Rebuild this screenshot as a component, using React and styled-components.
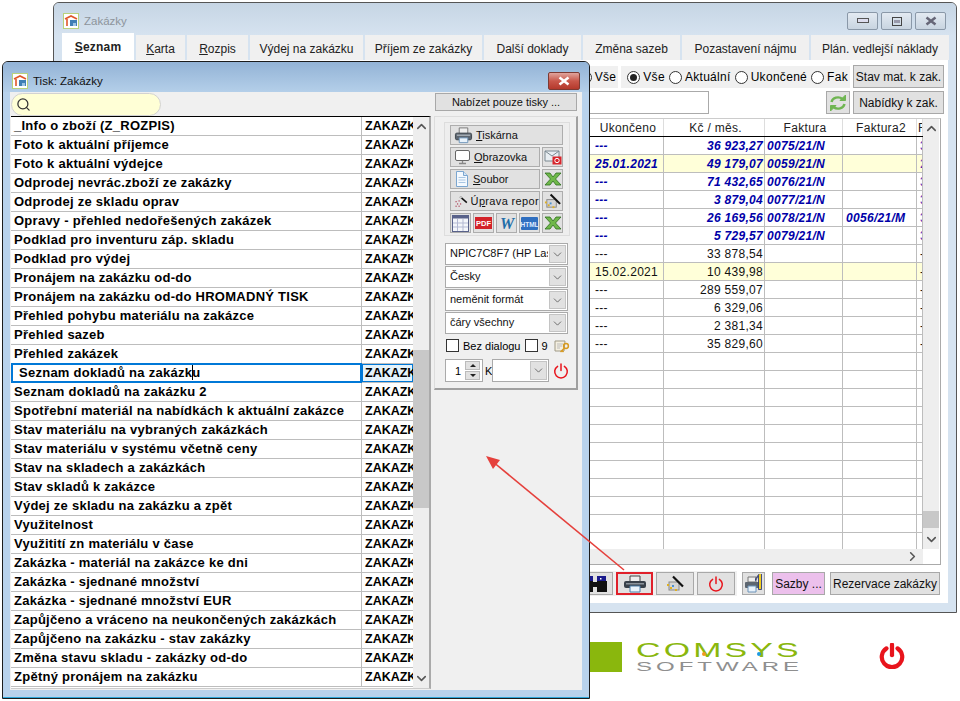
import React from "react";
import styled, { createGlobalStyle } from "styled-components";
import { ChevronDown, ChevronUp, ChevronRight, Search } from "lucide-react";

const Global = createGlobalStyle`
  html, body { margin:0; padding:0; background:#fff; }
  body { font-family:"Liberation Sans", Arial, sans-serif; font-size:12px; color:#000; }
  * { box-sizing:border-box; }
`;

const Desktop = styled.div`
  position:relative;
  width:960px;
  height:701px;
  overflow:hidden;
  padding:2px 0 0 53px;
`;

/* main window */
const MainWindow = styled.div`
  width:904px;
  height:611px;
  border:1px solid #555;
  border-radius:6px 6px 0 0;
  background:#d6e3f0;
  display:flex;
  flex-direction:column;
  padding:0 8px 9px;
`;
const TitleBar = styled.div`
  height:${({ $h }) => $h}px;
  flex:none;
  display:flex;
  align-items:center;
  gap:5px;
  color:${({ $active }) => ($active ? "#111" : "#8d949b")};
  font-size:11.5px;
`;
const MainTitle = styled(TitleBar)`
  margin:0 -8px;
  padding:3px 10px 0 9px;
  background:linear-gradient(#c6d5e4, #d6e3f0);
  border-radius:5px 5px 0 0;
`;
const WinButtons = styled.div`
  margin-left:auto;
  display:flex;
  gap:3px;
`;
const WinBtn = styled.div`
  width:${({ $w }) => $w || 31}px;
  height:18px;
  border:1px solid ${({ $red }) => ($red ? "#7d3a33" : "#8a98a8")};
  border-radius:2px;
  background:${({ $red }) => ($red ? "linear-gradient(#e0a49c,#c9574a 50%,#b4392c)" : "linear-gradient(#e3eaf2,#c8d4e0)")};
  display:flex;
  align-items:center;
  justify-content:center;
`;
const Tabs = styled.div`
  display:flex;
  height:27px;
  flex:none;
  align-items:flex-end;
  margin-top:-3px;
`;
const Tab = styled.div`
  width:${({ $w }) => $w}px;
  height:${({ $on }) => ($on ? 27 : 25)}px;
  margin-right:2px;
  padding-top:${({ $on }) => ($on ? 0 : 2)}px;
  flex:none;
  display:flex;
  align-items:center;
  justify-content:center;
  font-size:12px;
  letter-spacing:${({ $on }) => ($on ? ".2px" : "0")};
  font-weight:${({ $on }) => ($on ? 700 : 400)};
  background:${({ $on }) => ($on ? "#fff" : "#f0f0f0")};
  color:#222;
  u { text-underline-offset:1px; }
`;
const Client = styled.div`
  flex:1;
  min-height:0;
  background:#fff;
  padding:5px 4px 0;
  display:flex;
  flex-direction:column;
`;
const FilterRow = styled.div`
  display:flex;
  justify-content:flex-end;
  gap:3px;
  height:23px;
  flex:none;
`;
const SearchRow = styled(FilterRow)`
  margin-top:3px;
  justify-content:flex-start;
`;
const RadioGroup = styled.div`
  display:flex;
  align-items:center;
  gap:4px;
  height:22px;
  margin-top:1px;
  padding:0 2px 0 6px;
  background:#f0f0f0;
  font-size:12px;
  letter-spacing:.3px;
`;
const RadioLabel = styled.label`
  display:flex;
  align-items:center;
  gap:3px;
`;
const RadioDot = styled.span`
  width:13px;
  height:13px;
  border-radius:50%;
  border:1px solid #333;
  background:#fff;
  display:flex;
  align-items:center;
  justify-content:center;
  &::after {
    content:"";
    display:${({ $on }) => ($on ? "block" : "none")};
    width:7px;
    height:7px;
    border-radius:50%;
    background:#222;
  }
`;
const GrayBtn = styled.div`
  width:${({ $w }) => $w}px;
  height:${({ $h }) => $h || 23}px;
  flex:none;
  display:flex;
  align-items:center;
  justify-content:center;
  gap:3px;
  overflow:hidden;
  white-space:nowrap;
  background:${({ $bg }) => $bg || "#e1e1e1"};
  border:${({ $line }) => ($line ? `2px solid ${$line}` : "1px solid #a8a8a8")};
  color:#111;
  font-size:12px;
`;
const SazbyBtn = styled(GrayBtn)`
  margin-left:2px;
`;
const TextInput = styled.div`
  width:646px;
  height:23px;
  margin-right:114px;
  border:1px solid #aaa;
  background:#fff;
`;

/* data table of the main window */
const TableBox = styled.div`
  flex:none;
  margin:4px 0 0;
  width:875px;
  height:447px;
  border:1px solid #aaa;
  border-top-color:#ccc;
  display:grid;
  grid-template-columns:856px 16px 1px;
  grid-template-rows:430px 15px;
`;
const TableBody = styled.div`
  overflow:hidden;
`;
const HeadRow = styled.div`
  display:flex;
  height:18px;
  border-bottom:1px solid #000;
`;
const Row = styled.div`
  display:flex;
  height:18px;
  border-bottom:1px solid #bdbdbd;
  background:${({ $yellow }) => ($yellow ? "#ffffd9" : "#fff")};
`;
const Cell = styled.div`
  width:${({ $w }) => $w}px;
  flex:none;
  overflow:hidden;
  white-space:nowrap;
  border-right:1px solid #bdbdbd;
  padding:0 1px 0 ${({ $pad }) => ($pad === undefined ? 4 : $pad)}px;
  line-height:18px;
  font-size:12px;
  letter-spacing:.3px;
  text-align:${({ $right }) => ($right ? "right" : "left")};
  color:${({ $bold, $purple }) => ($purple ? "#5a1fb0" : $bold ? "#0000a8" : "#111")};
  font-weight:${({ $bold }) => ($bold ? 700 : 400)};
  font-style:${({ $bold }) => ($bold ? "italic" : "normal")};
`;
const HeadCell = styled(Cell)`
  text-align:center;
  color:#222;
  border-right-color:#ddd;
  font-weight:400;
  font-style:normal;
`;
const BlankCell = styled.div`
  width:${({ $w }) => $w}px;
  flex:none;
`;
const ScrollV = styled.div`
  background:#eee;
  display:flex;
  flex-direction:column;
  align-items:center;
  justify-content:space-between;
  position:relative;
  padding:2px 0;
  color:#555;
`;
const ScrollH = styled.div`
  background:#eee;
  display:flex;
  align-items:center;
  justify-content:flex-end;
  padding-right:3px;
  color:#555;
`;
const Thumb = styled.div`
  position:absolute;
  left:0;
  right:0;
  top:${({ $top }) => $top}px;
  height:${({ $h }) => $h}px;
  background:#c8c8c8;
`;
const Toolbar = styled.div`
  display:flex;
  align-items:center;
  height:25px;
  flex:none;
  margin-top:6px;
  padding-right:4px;
  justify-content:flex-end;
  gap:5px;
`;
const ToolStrip = styled.div`
  display:flex;
  gap:3px;
  align-items:center;
  background:#f0f0f0;
  height:25px;
  padding-right:2px;
`;

/* footer with logo */
const Footer = styled.div`
  display:flex;
  margin:29px 0 0 537px;
  height:32px;
  align-items:flex-start;
`;
const GreenBlock = styled.div`
  width:32px;
  height:30px;
  background:#8ab70d;
  margin-right:14px;
  flex:none;
`;
const Logo = styled.div`
  position:relative;
  width:162px;
  height:30px;
  flex:none;
`;
const LogoMain = styled.div`
  font-size:21px;
  line-height:16px;
  color:#8ab70d;
  letter-spacing:2px;
  transform:scaleX(1.61);
  transform-origin:left center;
  white-space:nowrap;
  height:20px;
`;
const LogoSub = styled.div`
  font-size:12px;
  line-height:10px;
  color:#8f8f8f;
  letter-spacing:2px;
  transform:scaleX(2);
  transform-origin:left center;
  white-space:nowrap;
`;
const LogoDot = styled.span`
  position:absolute;
  top:10px;
  left:${({ $x }) => $x}px;
  width:4px;
  height:4px;
  border-radius:50%;
  background:${({ $c }) => $c};
`;
const FooterPower = styled.div`
  margin-left:81px;
  margin-top:1px;
`;

/* print dialog */
const Dialog = styled.div`
  position:absolute;
  left:2px;
  top:61px;
  width:588px;
  height:638px;
  border:1px solid #1c1c1c;
  border-radius:6px 6px 0 0;
  background:#b8d2ec;
  padding:0 7px 8px;
  display:flex;
  flex-direction:column;
  box-shadow:inset 0 -1px 0 #2ea6d8;
`;
const DialogTitle = styled(TitleBar)`
  margin:0 -7px;
  padding:7px 9px 0 9px;
  background:linear-gradient(#93b3d6, #b4cfe9);
  border-radius:5px 5px 0 0;
`;
const DialogBody = styled.div`
  flex:1;
  min-height:0;
  background:#f0f0f0;
  padding:1px 0 0 1px;
  display:flex;
  flex-direction:column;
`;
const DialogTop = styled.div`
  display:flex;
  justify-content:space-between;
  height:23px;
  flex:none;
  padding-right:5px;
`;
const Pill = styled.div`
  width:150px;
  height:23px;
  border-radius:12px;
  background:#ffffd6;
  border:1px solid #d2d2d2;
  display:flex;
  align-items:center;
  padding-left:4px;
  color:#333;
`;
const FilterBtn = styled(GrayBtn)`
  height:18px;
  font-size:11px;
`;
const DialogMain = styled.div`
  display:flex;
  gap:3px;
  align-items:flex-start;
`;
const ReportList = styled.div`
  width:420px;
  height:573px;
  flex:none;
  border-top:1px solid #000;
  border-right:2px solid #aaa;
  border-bottom:1px solid #ccc;
  background:#fff;
  display:grid;
  grid-template-columns:402px 16px;
`;
const ReportRows = styled.div`
  overflow:hidden;
`;
const ReportRow = styled.div`
  display:flex;
  height:19px;
  border-bottom:1px solid #bdbdbd;
  font-size:13px;
  line-height:18px;
  letter-spacing:.26px;
  font-weight:700;
`;
const ReportName = styled.div`
  width:351px;
  flex:none;
  padding-left:3px;
  white-space:nowrap;
  overflow:hidden;
  border-right:1px solid #bdbdbd;
  ${({ $sel }) => $sel && "border:2px solid #0078d7; line-height:16px; margin-top:-1px; height:20px; padding-left:6px;"}
`;
const ReportCode = styled.div`
  width:51px;
  flex:none;
  overflow:hidden;
  white-space:nowrap;
  padding-left:3px;
  font-size:12.5px;
  letter-spacing:0;
  ${({ $sel }) => $sel && "background:#e5f3fb; box-shadow:inset 0 0 0 1px #0078d7;"}
`;
const Caret = styled.span`
  display:inline-block;
  width:1px;
  height:15px;
  margin:0 -1px -3px 0;
  background:#000;
`;
const SidePanel = styled.div`
  width:144px;
  height:274px;
  flex:none;
  background:#f0f0f0;
  border-left:1px solid #ddd;
  border-top:1px solid #ddd;
  border-right:2px solid #a0a0a0;
  border-bottom:2px solid #a0a0a0;
  padding:5px 7px 0 9px;
`;
const OutputGroup = styled.div`
  width:126px;
  height:114px;
  background:#eee;
  border:1px solid #ddd;
  padding:2px 5px;
  display:flex;
  flex-direction:column;
  gap:2px;
`;
const OutRow = styled.div`
  display:flex;
  gap:2px;
`;
const OutBtn = styled.div`
  width:${({ $w }) => $w || 21}px;
  height:20px;
  flex:none;
  background:#e1e1e1;
  border:1px solid #adadad;
  display:flex;
  align-items:center;
  justify-content:${({ $w }) => ($w ? "flex-start" : "center")};
  padding-left:${({ $w }) => ($w ? 3 : 0)}px;
  gap:3px;
  overflow:hidden;
  white-space:nowrap;
  font-size:11px;
  color:#111;
  u { text-underline-offset:1px; }
`;
const WideLabel = styled.span`
  letter-spacing:.35px;
`;
const SelectStack = styled.div`
  margin:7px 0 0 1px;
  display:flex;
  flex-direction:column;
  gap:1px;
`;
const SelectBox = styled.div`
  width:${({ $w }) => $w || 123}px;
  height:${({ $h }) => $h || 22}px;
  border:1px solid #aaa;
  background:#fff;
  display:flex;
  align-items:stretch;
  font-size:11px;
  color:#111;
`;
const SelectText = styled.div`
  flex:1;
  min-width:0;
  padding-left:4px;
  line-height:19px;
  overflow:hidden;
  white-space:nowrap;
`;
const SelectArrow = styled.div`
  width:17px;
  margin:1px;
  flex:none;
  background:#e1e1e1;
  border:1px solid #c4c4c4;
  color:#555;
  display:flex;
  align-items:center;
  justify-content:center;
`;
const CheckRow = styled.div`
  display:flex;
  align-items:center;
  margin-top:5px;
  height:13px;
  font-size:11px;
  white-space:nowrap;
  padding-left:2px;
  gap:4px;
`;
const CheckBox = styled.span`
  width:13px;
  height:13px;
  border:1px solid #333;
  background:#fff;
  flex:none;
`;
const KeySlot = styled.span`
  margin-left:2px;
  display:flex;
`;
const SpinRow = styled.div`
  display:flex;
  align-items:center;
  margin:7px 0 0 1px;
  height:23px;
  font-size:11px;
`;
const SpinBox = styled.div`
  width:38px;
  height:23px;
  border:1px solid #aaa;
  background:#fff;
  display:flex;
  justify-content:flex-end;
  align-items:center;
  gap:4px;
  padding-right:2px;
`;
const SpinBtns = styled.div`
  width:15px;
  display:flex;
  flex-direction:column;
  gap:1px;
`;
const SpinBtn = styled.div`
  height:9px;
  background:#e1e1e1;
  border:1px solid #bbb;
  display:flex;
  align-items:center;
  justify-content:center;
  &::after {
    content:"";
    border-left:3px solid transparent;
    border-right:3px solid transparent;
    ${({ $down }) => ($down ? "border-top:3px solid #222;" : "border-bottom:3px solid #222;")}
  }
`;
const SpinK = styled.span`
  width:7px;
  margin-left:2px;
  overflow:hidden;
`;
const PowerSlot = styled.span`
  margin-left:4px;
  display:flex;
`;
const Arrow = styled.svg`
  position:absolute;
  left:0;
  top:0;
  pointer-events:none;
`;

/* drawings */
const AppIcon = () => (
  <svg width="16" height="16" viewBox="0 0 16 16">
    <rect x=".5" y=".5" width="15" height="15" fill="#fff" stroke="#b9d27c" />
    <path d="M2 6 L8 3 L14 6" fill="none" stroke="#e0562a" strokeWidth="1.6" />
    <path d="M4 6v7" stroke="#e0562a" strokeWidth="1.6" />
    <rect x="7" y="7" width="7" height="6" fill="#3f7fb5" />
    <rect x="10" y="10" width="3" height="3" fill="#9cc4e4" />
  </svg>
);
const PrinterIcon = ({ s = 20 }) => (
  <svg width={s} height={s} viewBox="0 0 20 20">
    <path d="M5.5 2h9v6h-9z" fill="#eee" stroke="#777" />
    <rect x="1.5" y="7.5" width="17" height="7" rx="1.5" fill="#5d6670" stroke="#3d444c" />
    <rect x="3" y="9" width="14" height="1.5" fill="#a3abb3" />
    <path d="M5.5 12.5h9v5h-9z" fill="#e8f2fb" stroke="#6d93b8" />
  </svg>
);
const DarkPrinterIcon = () => (
  <svg width="26" height="18" viewBox="0 0 26 18">
    <path d="M8 1h10v6H8z" fill="#eee" stroke="#444" />
    <rect x="2" y="6" width="22" height="7" rx="2" fill="#39414a" />
    <rect x="4" y="8" width="18" height="1.5" fill="#8b939b" />
    <path d="M8 11h10v6H8z" fill="#eaf3fb" stroke="#4c7ea8" />
  </svg>
);
const MonitorIcon = () => (
  <svg width="17" height="16" viewBox="0 0 17 16">
    <rect x="1.5" y="1.5" width="14" height="10" rx="1.5" fill="#fff" stroke="#666" />
    <path d="M8.5 12v2M5 14.5h7" stroke="#888" strokeWidth="1.3" />
  </svg>
);
const DocIcon = () => (
  <svg width="16" height="18" viewBox="0 0 16 18">
    <path d="M2.5 1.5h7l4 4v11h-11z" fill="#f4f9fe" stroke="#7ba6d0" />
    <path d="M9.5 1.5v4h4" fill="#d6e6f5" stroke="#7ba6d0" />
    <path d="M4.5 7.5h7M4.5 10h7M4.5 12.5h7" stroke="#a9c6e2" />
  </svg>
);
const WandIcon = () => (
  <svg width="18" height="17" viewBox="0 0 18 17">
    <path d="M8 2l9 8" stroke="#111" strokeWidth="2" />
    <path d="M8 2l2 1.8" stroke="#ddd" strokeWidth="2" />
    <g fill="#a8324a">
      <rect x="2" y="8" width="1.5" height="1.5" />
      <rect x="6" y="7" width="1.5" height="1.5" />
      <rect x="4" y="11" width="1.5" height="1.5" />
      <rect x="8" y="11" width="1.5" height="1.5" />
      <rect x="2" y="14" width="1.5" height="1.5" />
      <rect x="6" y="14" width="1.5" height="1.5" />
    </g>
  </svg>
);
const ReportWandIcon = ({ s = 18 }) => (
  <svg width={s} height={s} viewBox="0 0 18 18">
    <rect x="3" y="7" width="10" height="8" fill="#d4d4d4" stroke="#888" />
    <g fill="#e0b020">
      <rect x="1" y="9" width="2" height="2" />
      <rect x="4" y="12" width="2" height="2" />
      <rect x="9" y="14" width="2" height="2" />
    </g>
    <rect x="6" y="10" width="2" height="2" fill="#4a90d0" />
    <path d="M7 1.5l10 10" stroke="#111" strokeWidth="2.2" />
  </svg>
);
const MailIcon = () => (
  <svg width="18" height="16" viewBox="0 0 18 16">
    <path d="M1 2h14v10H1z" fill="#e8eef2" stroke="#7c8a92" />
    <path d="M1 2l7 5 7-5" fill="none" stroke="#7c8a92" />
    <rect x="8.5" y="7.5" width="9" height="8" fill="#d8262c" />
    <circle cx="13" cy="11.5" r="2.2" fill="none" stroke="#fff" />
  </svg>
);
const ExcelIcon = () => (
  <svg width="18" height="14" viewBox="0 0 18 14">
    <path d="M1 1h5l3 4 3-4h5l-5.5 6 5.5 6h-5l-3-4-3 4H1l5.5-6z" fill="#6fb84a" stroke="#2e6f1e" strokeWidth=".8" />
  </svg>
);
const CalendarIcon = () => (
  <svg width="17" height="17" viewBox="0 0 17 17">
    <rect x=".5" y=".5" width="16" height="16" fill="#f4f6fa" stroke="#59628a" />
    <rect x=".5" y=".5" width="16" height="3" fill="#59628a" />
    <path d="M5.5 4v12M11 4v12M1 8h15M1 12h15" stroke="#b3b9d2" />
  </svg>
);
const PdfIcon = () => (
  <svg width="17" height="12" viewBox="0 0 17 12">
    <rect width="17" height="12" fill="#d3232a" />
    <text x="8.5" y="9" textAnchor="middle" fontSize="7.5" fontWeight="700" fill="#fff" fontFamily="Liberation Sans">PDF</text>
  </svg>
);
const WordIcon = () => (
  <svg width="18" height="15" viewBox="0 0 18 15">
    <text x="9" y="13" textAnchor="middle" fontSize="16" fontWeight="700" fontStyle="italic" fill="#1f6ea8" fontFamily="Liberation Serif">W</text>
  </svg>
);
const HtmlIcon = () => (
  <svg width="17" height="13" viewBox="0 0 17 13">
    <rect width="17" height="13" rx="1" fill="#2f6fc0" />
    <text x="8.5" y="9.5" textAnchor="middle" fontSize="6.5" fontWeight="700" fill="#dfeaff" fontFamily="Liberation Sans">HTML</text>
  </svg>
);
const KeyIcon = () => (
  <svg width="16" height="16" viewBox="0 0 16 16">
    <path d="M1 3h10l-1 10H1z" fill="#f4efe1" stroke="#a09a86" />
    <path d="M3 6h6M3 8h5M3 10h3" stroke="#bbb" />
    <circle cx="12" cy="8" r="2.4" fill="none" stroke="#d89a1e" strokeWidth="1.5" />
    <path d="M10.5 10l-4 4M8 12.5l1.5 1.5" stroke="#d89a1e" strokeWidth="1.5" />
  </svg>
);
const PowerIcon = ({ s = 16, w = 1.5 }) => (
  <svg width={s} height={s} viewBox="0 0 16 16" fill="none" stroke="#e8141c" strokeWidth={w} strokeLinecap="round">
    <path d="M4.6 3.3a6.3 6.3 0 1 0 6.8 0" />
    <path d="M8 1v6.5" />
  </svg>
);
const RefreshIcon = () => (
  <svg width="20" height="18" viewBox="0 0 20 18" fill="none" stroke="#6fb552" strokeWidth="2.4">
    <path d="M3.5 8a6.5 5.5 0 0 1 11-3" />
    <path d="M16.5 10a6.5 5.5 0 0 1-11 3" />
    <path d="M17.5 1v5.5h-5.5z" fill="#6fb552" strokeWidth="1" />
    <path d="M2.5 17v-5.5h5.5z" fill="#6fb552" strokeWidth="1" />
  </svg>
);
const BinocularsIcon = () => (
  <svg width="26" height="18" viewBox="0 0 26 18">
    <rect x="2" y="1" width="9" height="6" fill="#1a1a8c" />
    <rect x="15" y="1" width="9" height="6" fill="#1a1a8c" />
    <rect x="1" y="6" width="10" height="11" fill="#111" />
    <rect x="15" y="6" width="10" height="11" fill="#111" />
    <rect x="10" y="7" width="6" height="5" fill="#111" />
    <rect x="4" y="3" width="1.5" height="1.5" fill="#fff" />
    <rect x="18" y="3" width="1.5" height="1.5" fill="#fff" />
  </svg>
);
const PrinterOneIcon = () => (
  <svg width="20" height="20" viewBox="0 0 20 20">
    <path d="M4 3h8v5H4z" fill="#eee" stroke="#777" />
    <rect x="1" y="8" width="15" height="6" rx="1" fill="#5d6670" />
    <path d="M4 12h8v6H4z" fill="#e8f2fb" stroke="#6d93b8" />
    <path d="M14.5 1.5v14h3v-16h-2l-4 5v2z" fill="#f2cf1e" stroke="#1b2a80" strokeWidth=".8" />
  </svg>
);

const tabs = [
  ["Seznam", 72, "S"], ["Karta", 49, "K"], ["Rozpis", 61, "R"], ["Výdej na zakázku", 113], ["Příjem ze zakázky", 117],
  ["Další doklady", 97], ["Změna sazeb", 97], ["Pozastavení nájmu", 127], ["Plán. vedlejší náklady", 138],
];

const rows = [
  ["---", "36 923,27", "0075/21/N", "", "3", true],
  ["25.01.2021", "49 179,07", "0059/21/N", "", "2", true, true],
  ["---", "71 432,65", "0076/21/N", "", "3", true],
  ["---", "3 879,04", "0077/21/N", "", "3", true],
  ["---", "26 169,56", "0078/21/N", "0056/21/M", "3", true],
  ["---", "5 729,57", "0079/21/N", "", "3", true],
  ["---", "33 878,54", "", "", "-"],
  ["15.02.2021", "10 439,98", "", "", "-", false, true],
  ["---", "289 559,07", "", "", "-"],
  ["---", "6 329,06", "", "", "-"],
  ["---", "2 381,34", "", "", "-"],
  ["---", "35 829,60", "", "", "-"],
];
while (rows.length < 23) rows.push(["", "", "", "", ""]);

const reports = [
  "_Info o zboží (Z_ROZPIS)", "Foto k aktuální příjemce", "Foto k aktuální výdejce", "Odprodej nevrác.zboží ze zakázky",
  "Odprodej ze skladu oprav", "Opravy - přehled nedořešených zakázek", "Podklad pro inventuru záp. skladu", "Podklad pro výdej",
  "Pronájem na zakázku od-do", "Pronájem na zakázku od-do HROMADNÝ TISK", "Přehled pohybu materiálu na zakázce", "Přehled sazeb",
  "Přehled zakázek", "Seznam dokladů na zakázku", "Seznam dokladů na zakázku 2", "Spotřební materiál na nabídkách k aktuální zakázce",
  "Stav materiálu na vybraných zakázkách", "Stav materiálu v systému včetně ceny", "Stav na skladech a zakázkách", "Stav skladů k zakázce",
  "Výdej ze skladu na zakázku a zpět", "Využitelnost", "Využitití zn materiálu v čase", "Zakázka - materiál na zakázce ke dni",
  "Zakázka - sjednané množství", "Zakázka - sjednané množství EUR", "Zapůjčeno a vráceno na neukončených zakázkách",
  "Zapůjčeno na zakázku - stav zakázky", "Změna stavu skladu - zakázky od-do", "Zpětný pronájem na zakázku",
];

const Select = ({ children, w, h }) => (
  <SelectBox $w={w} $h={h}>
    <SelectText>{children}</SelectText>
    <SelectArrow><ChevronDown size={13} strokeWidth={1.5} /></SelectArrow>
  </SelectBox>
);

const App = () => {
  return (
    <Desktop>
      <Global />
      <MainWindow>
        <MainTitle $h={33}>
          <AppIcon />
          <span>Zakázky</span>
          <WinButtons>
            <WinBtn>
              <svg width="12" height="6"><rect x=".5" y=".5" width="11" height="4" fill="#dde" stroke="#555" /></svg>
            </WinBtn>
            <WinBtn>
              <svg width="10" height="9"><rect x=".5" y=".5" width="9" height="8" fill="none" stroke="#444" /><rect x="2" y="3" width="6" height="3" fill="#99a" /></svg>
            </WinBtn>
            <WinBtn>
              <svg width="12" height="10"><path d="M1.5 1.5l9 7M10.5 1.5l-9 7" stroke="#667" strokeWidth="2.5" /></svg>
            </WinBtn>
          </WinButtons>
        </MainTitle>
        <Tabs>
          {tabs.map(([label, w, key], i) => (
            <Tab key={label} $w={w} $on={i === 0}>
              {key ? <><u>{key}</u>{label.slice(1)}</> : label}
            </Tab>
          ))}
        </Tabs>
        <Client>
          <FilterRow>
            <RadioGroup>
              <RadioLabel><RadioDot />Vše</RadioLabel>
            </RadioGroup>
            <RadioGroup>
              <RadioLabel><RadioDot $on />Vše</RadioLabel>
              <RadioLabel><RadioDot />Aktuální</RadioLabel>
              <RadioLabel><RadioDot />Ukončené</RadioLabel>
              <RadioLabel><RadioDot />Fak</RadioLabel>
            </RadioGroup>
            <GrayBtn $w={91}>Stav mat. k zak.</GrayBtn>
          </FilterRow>
          <SearchRow>
            <TextInput />
            <GrayBtn $w={24}><RefreshIcon /></GrayBtn>
            <GrayBtn $w={91}>Nabídky k zak.</GrayBtn>
          </SearchRow>
          <TableBox>
            <TableBody>
              <HeadRow>
                <BlankCell $w={523} />
                <HeadCell $w={74}>Ukončeno</HeadCell>
                <HeadCell $w={101}>Kč / měs.</HeadCell>
                <HeadCell $w={78}>Faktura</HeadCell>
                <HeadCell $w={74}>Faktura2</HeadCell>
                <HeadCell $w={6} $pad={1}>F</HeadCell>
              </HeadRow>
              {rows.map((r, i) => (
                <Row key={i} $yellow={r[6]}>
                  <BlankCell $w={523} />
                  <Cell $w={74} $pad={5} $bold={r[5]}>{r[0]}</Cell>
                  <Cell $w={101} $bold={r[5]} $right>{r[1]}</Cell>
                  <Cell $w={78} $pad={2} $bold={r[5]}>{r[2]}</Cell>
                  <Cell $w={74} $pad={3} $bold={r[5]}>{r[3]}</Cell>
                  <Cell $w={6} $pad={3} $purple={r[5]}>{r[4]}</Cell>
                </Row>
              ))}
            </TableBody>
            <ScrollV>
              <ChevronUp size={15} strokeWidth={2.5} />
              <Thumb $top={392} $h={17} />
              <ChevronDown size={15} strokeWidth={2.5} />
            </ScrollV>
            <span />
            <ScrollH><ChevronRight size={15} strokeWidth={2.5} /></ScrollH>
          </TableBox>
          <Toolbar>
            <ToolStrip>
              <GrayBtn $w={37}><BinocularsIcon /></GrayBtn>
              <GrayBtn $w={37} $line="#e0202a"><DarkPrinterIcon /></GrayBtn>
              <GrayBtn $w={38}><ReportWandIcon s={18} /></GrayBtn>
              <GrayBtn $w={38}><PowerIcon s={16} /></GrayBtn>
            </ToolStrip>
            <GrayBtn $w={23}><PrinterOneIcon /></GrayBtn>
            <SazbyBtn $w={53} $bg="#ecc0ec">Sazby ...</SazbyBtn>
            <GrayBtn $w={110}>Rezervace zakázky</GrayBtn>
          </Toolbar>
        </Client>
      </MainWindow>

      <Footer>
        <GreenBlock />
        <Logo>
          <LogoMain>COMSYS</LogoMain>
          <LogoSub>SOFTWARE</LogoSub>
          <LogoDot $x={66} $c="#ef9a1e" />
          <LogoDot $x={121} $c="#1e9ae0" />
        </Logo>
        <FooterPower><PowerIcon s={26} w={2.6} /></FooterPower>
      </Footer>

      <Dialog>
        <DialogTitle $h={30} $active>
          <AppIcon />
          <span>Tisk: Zakázky</span>
          <WinButtons>
            <WinBtn $red $w={32}>
              <svg width="12" height="10"><path d="M1.5 1.5l9 7M10.5 1.5l-9 7" stroke="#fff" strokeWidth="2.5" /></svg>
            </WinBtn>
          </WinButtons>
        </DialogTitle>
        <DialogBody>
          <DialogTop>
            <Pill><Search size={15} strokeWidth={2} /></Pill>
            <FilterBtn $w={142}>Nabízet pouze tisky ...</FilterBtn>
          </DialogTop>
          <DialogMain>
            <ReportList>
              <ReportRows>
                {reports.map((name, i) => (
                  <ReportRow key={name}>
                    <ReportName $sel={i === 13}>
                      {i === 13 ? <>Seznam dokladů na zakázk<Caret />u</> : name}
                    </ReportName>
                    <ReportCode $sel={i === 13}>ZAKAZKY</ReportCode>
                  </ReportRow>
                ))}
              </ReportRows>
              <ScrollV>
                <ChevronUp size={15} strokeWidth={2.5} />
                <Thumb $top={233} $h={158} />
                <ChevronDown size={15} strokeWidth={2.5} />
              </ScrollV>
            </ReportList>
            <SidePanel>
              <OutputGroup>
                <OutRow>
                  <OutBtn $w={113}><PrinterIcon s={19} /><span><u>T</u>iskárna</span></OutBtn>
                </OutRow>
                <OutRow>
                  <OutBtn $w={90}><MonitorIcon /><span><u>O</u>brazovka</span></OutBtn>
                  <OutBtn><MailIcon /></OutBtn>
                </OutRow>
                <OutRow>
                  <OutBtn $w={90}><DocIcon /><span><u>S</u>oubor</span></OutBtn>
                  <OutBtn><ExcelIcon /></OutBtn>
                </OutRow>
                <OutRow>
                  <OutBtn $w={90}><WandIcon /><WideLabel>Ú<u>p</u>rava repor</WideLabel></OutBtn>
                  <OutBtn><ReportWandIcon s={17} /></OutBtn>
                </OutRow>
                <OutRow>
                  <OutBtn><CalendarIcon /></OutBtn>
                  <OutBtn><PdfIcon /></OutBtn>
                  <OutBtn><WordIcon /></OutBtn>
                  <OutBtn><HtmlIcon /></OutBtn>
                  <OutBtn><ExcelIcon /></OutBtn>
                </OutRow>
              </OutputGroup>
              <SelectStack>
                <Select>NPIC7C8F7 (HP LaserJet)</Select>
                <Select>Česky</Select>
                <Select>neměnit formát</Select>
                <Select>čáry všechny</Select>
              </SelectStack>
              <CheckRow>
                <CheckBox />
                <span>Bez dialogu</span>
                <CheckBox />
                <span>9</span>
                <KeySlot><KeyIcon /></KeySlot>
              </CheckRow>
              <SpinRow>
                <SpinBox>
                  <span>1</span>
                  <SpinBtns><SpinBtn /><SpinBtn $down /></SpinBtns>
                </SpinBox>
                <SpinK>K</SpinK>
                <Select w={57} h={23} />
                <PowerSlot><PowerIcon s={16} /></PowerSlot>
              </SpinRow>
            </SidePanel>
          </DialogMain>
        </DialogBody>
      </Dialog>

      <Arrow width="960" height="701" viewBox="0 0 960 701">
        <line x1="624" y1="570" x2="492" y2="461" stroke="#e5403c" strokeWidth="1.6" />
        <path d="M486 456 L500 460 L493 469 Z" fill="#e5403c" />
      </Arrow>
    </Desktop>
  );
};

export default App;
